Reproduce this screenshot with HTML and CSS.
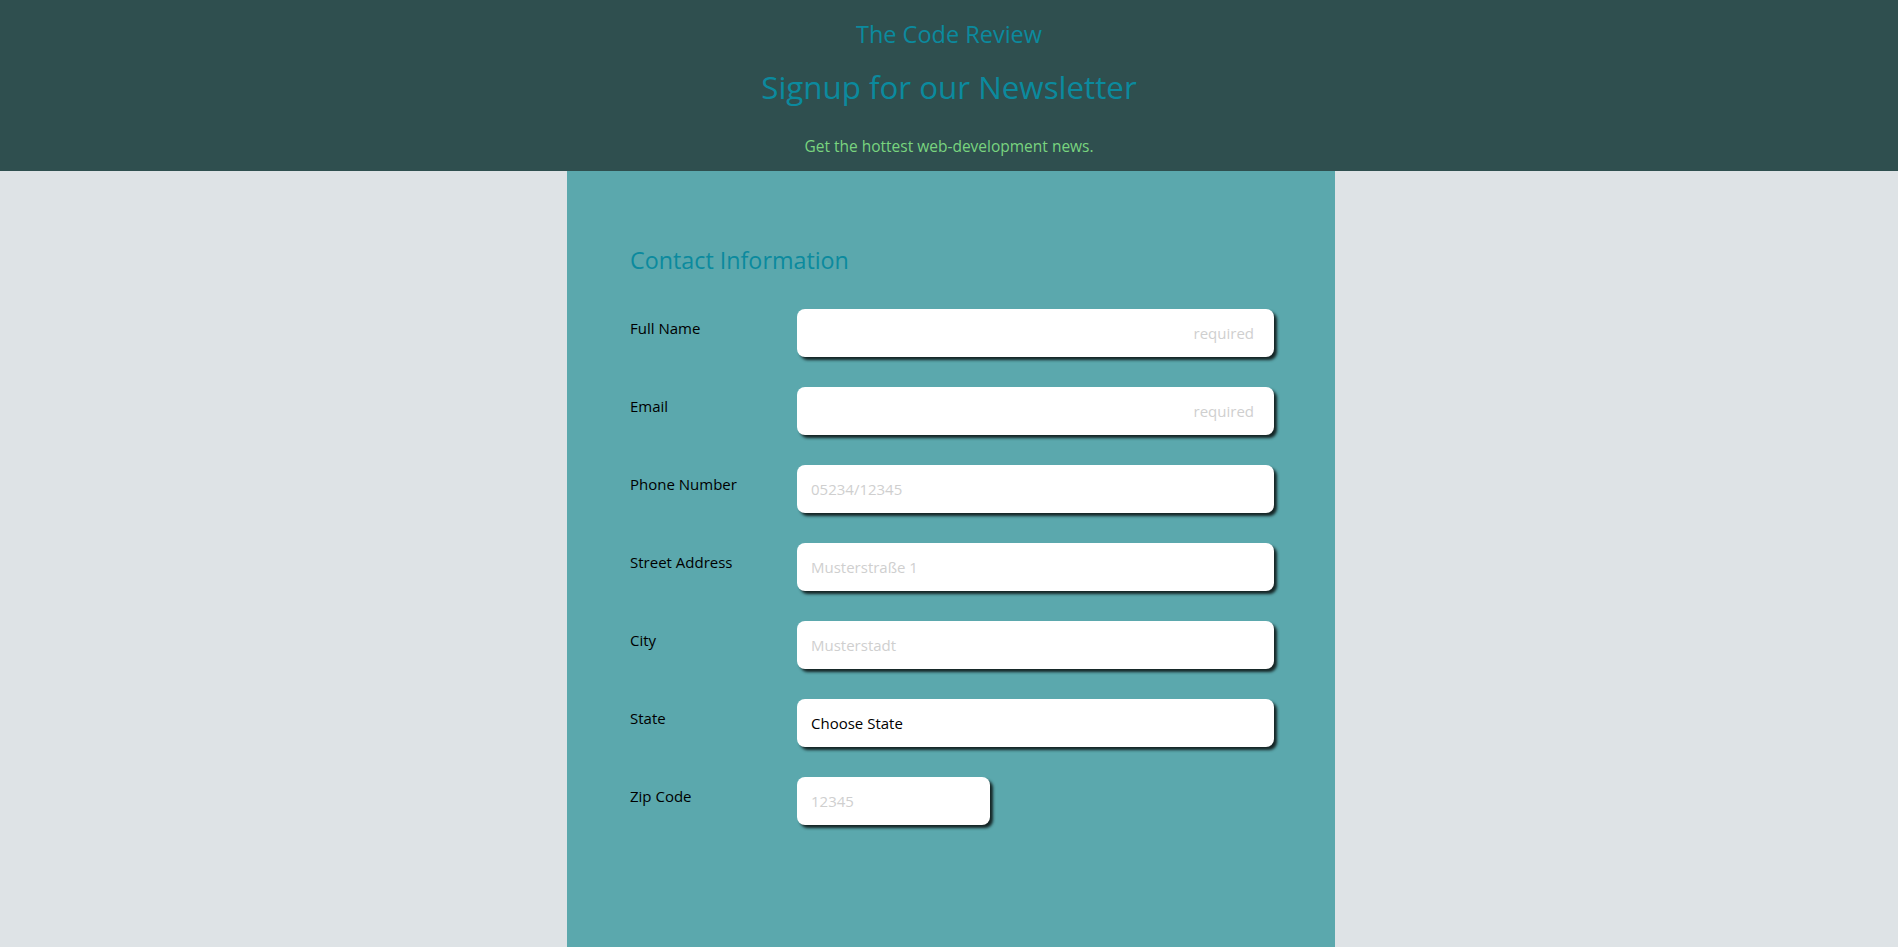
FILE: index.html
```html
<!DOCTYPE html>
<html lang="en">
<head>
<meta charset="utf-8">
<title>The Code Review</title>
<link rel="stylesheet" href="styles.css">
</head>
<body>
<header class="site-header">
  <div class="brand">The Code Review</div>
  <h1 class="title">Signup for our Newsletter</h1>
  <p class="tagline">Get the hottest web-development news.</p>
</header>
<main class="panel">
  <h2 class="section-title">Contact Information</h2>
  <form class="form-grid">
    <label class="label" for="name">Full Name</label>
    <input class="field field-req" id="name" type="text" placeholder="required">

    <label class="label" for="email">Email</label>
    <input class="field field-req" id="email" type="email" placeholder="required">

    <label class="label" for="phone">Phone Number</label>
    <input class="field" id="phone" type="tel" placeholder="05234/12345">

    <label class="label" for="street">Street Address</label>
    <input class="field" id="street" type="text" placeholder="Musterstraße 1">

    <label class="label" for="city">City</label>
    <input class="field" id="city" type="text" placeholder="Musterstadt">

    <label class="label" for="state">State</label>
    <select class="field field-select" id="state">
      <option>Choose State</option>
    </select>

    <label class="label" for="zip">Zip Code</label>
    <input class="field field-zip" id="zip" type="text" placeholder="12345">
  </form>
</main>
</body>
</html>
```

FILE: styles.css
```css
html, body {
  margin: 0;
  padding: 0;
}

body {
  background: #dee3e6;
  font-family: "Open Sans", "Noto Sans", sans-serif;
  overflow: hidden;
}

.site-header {
  background: #2f4f4f;
  text-align: center;
  padding: 19px 0 13px;
  height: 171px;
  box-sizing: border-box;
}

.brand {
  color: #0b8a9e;
  font-size: 23.5px;
  font-weight: 500;
  line-height: 30px;
}

.title {
  color: #0b8a9e;
  font-size: 31.3px;
  font-weight: 500;
  line-height: 40px;
  margin: 18px 0 0;
}

.tagline {
  color: #79d47f;
  font-size: 15.5px;
  line-height: 24px;
  margin: 27px 0 0;
}

.panel {
  background: #5ba8ad;
  width: 768px;
  box-sizing: border-box;
  margin-left: calc(50% - 382px);
  padding: 74px 63px 140px;
}

.section-title {
  color: #0b8a9e;
  font-size: 23.3px;
  font-weight: 500;
  line-height: 30px;
  margin: 0 0 34px;
}

.form-grid {
  display: grid;
  grid-template-columns: 167px 477px;
  grid-auto-rows: 48px;
  row-gap: 30px;
}

.label {
  color: #000;
  font-size: 15px;
  line-height: 24px;
  padding-top: 7px;
}

.field {
  box-sizing: border-box;
  height: 48px;
  width: 100%;
  border: none;
  border-radius: 8px;
  background: #fff;
  box-shadow: 3px 3px 3px #152525;
  padding: 0 20px 0 14px;
  font-family: inherit;
  font-size: 15px;
  color: #000;
  outline: none;
}

.field::placeholder {
  color: #cfcfcf;
}

.field-req {
  text-align: right;
}

.field-select {
  appearance: none;
  -webkit-appearance: none;
}

.field-zip {
  width: 193px;
}
```
